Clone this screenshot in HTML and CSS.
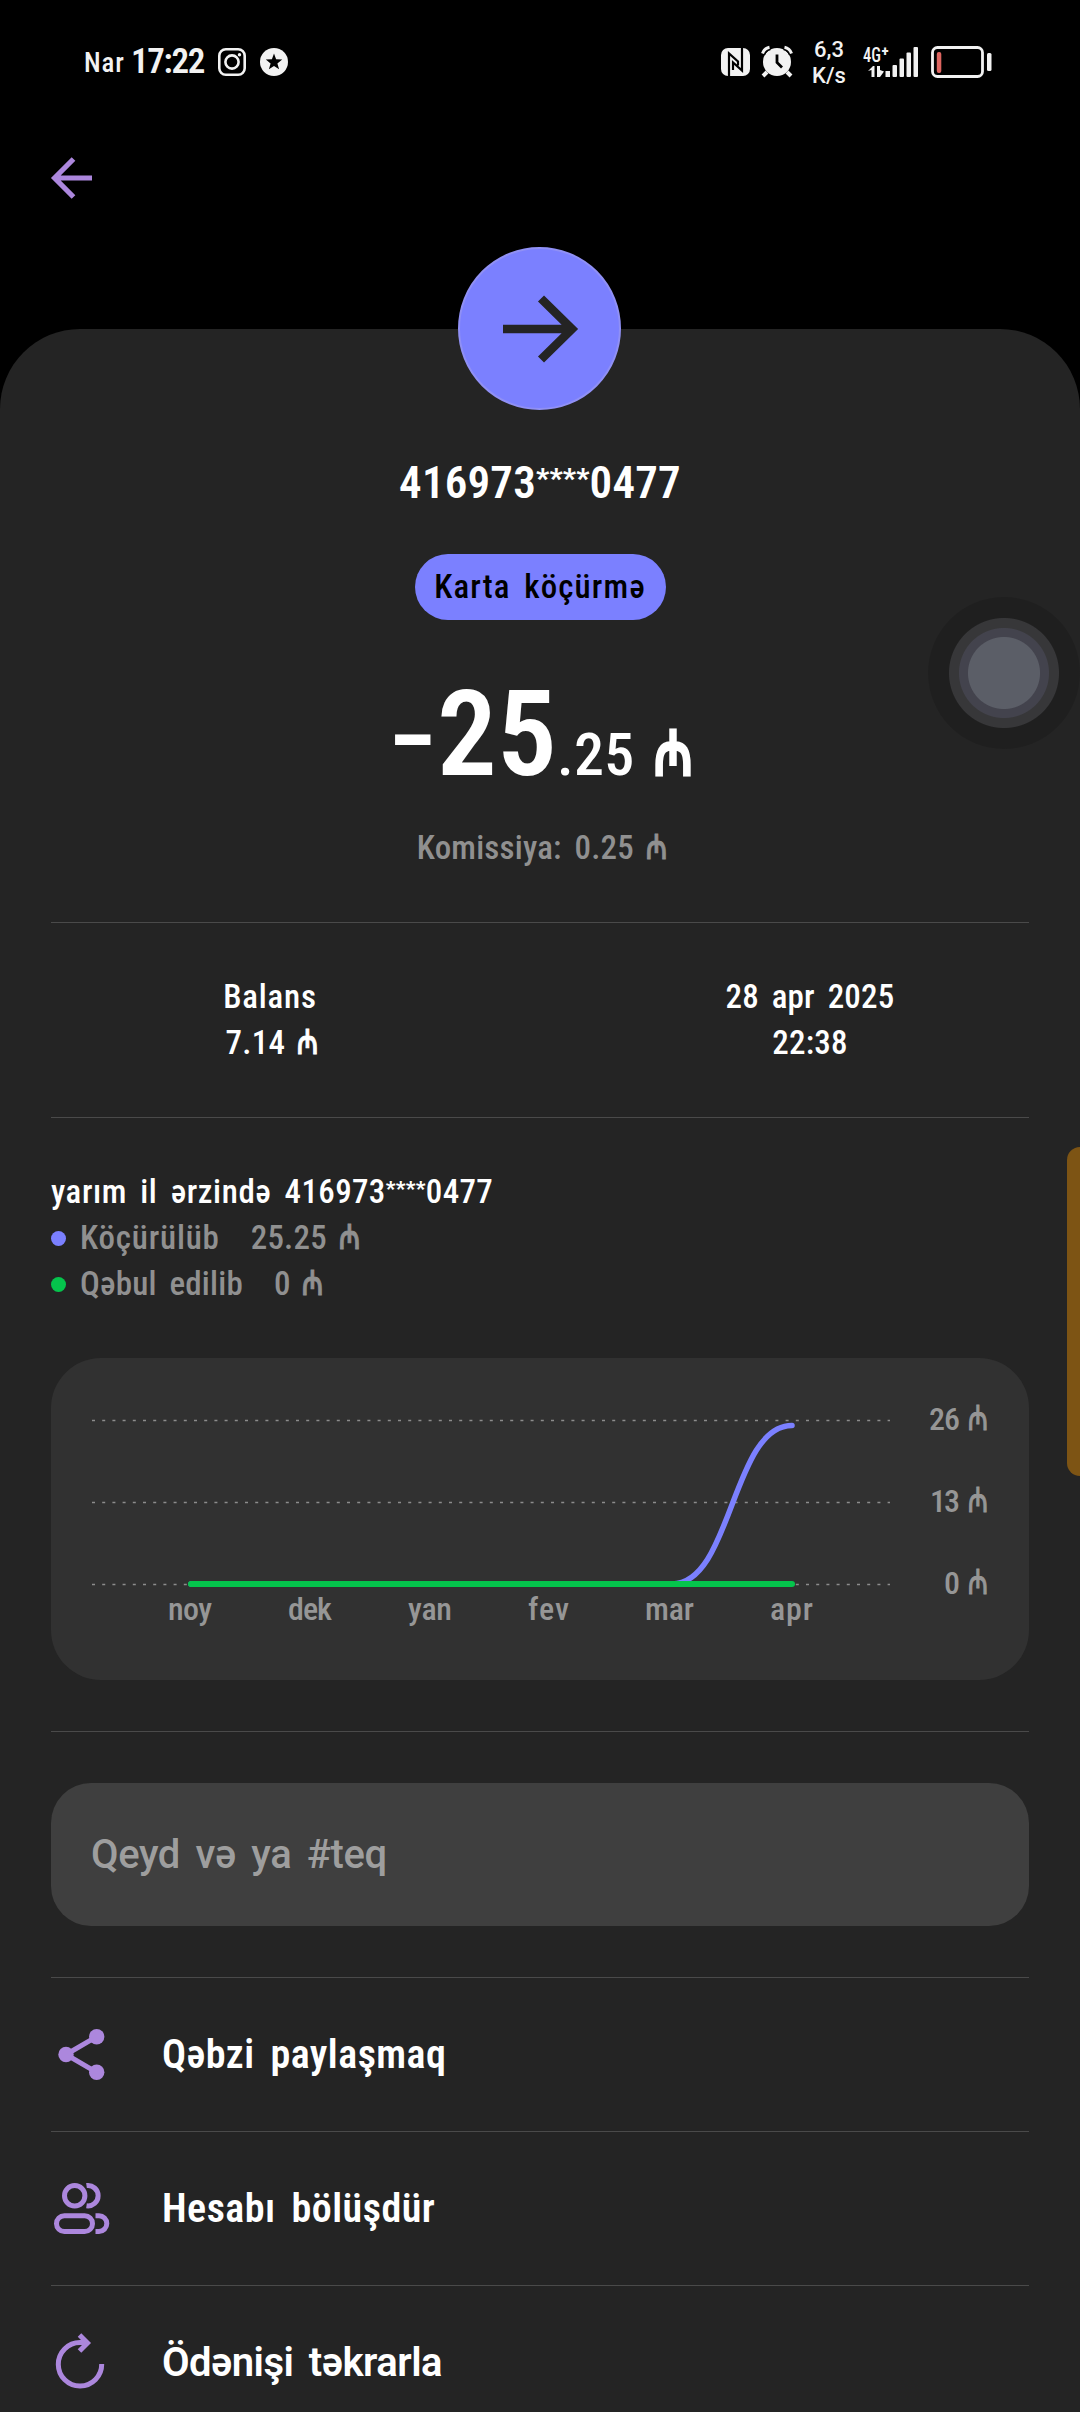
FILE: index.html
```html
<!DOCTYPE html>
<html lang="az">
<head>
<meta charset="utf-8">
<title>Karta köçürmə</title>
<link rel="stylesheet" href="styles.css">
</head>
<body>
<div class="screen">
  <div class="status">
    <span class="carrier">Nar</span>
    <span class="clock">17:22</span>
    <svg class="insta" width="28" height="28" viewBox="0 0 28 28" fill="none" stroke="#f2f2f2" stroke-width="2.6"><rect x="1.3" y="1.3" width="25.4" height="25.4" rx="6.5"/><circle cx="14" cy="14" r="6.6"/><circle cx="21.5" cy="6.8" r="1.7" fill="#f2f2f2" stroke="none"/></svg>
    <svg class="star" width="28" height="28" viewBox="0 0 28 28"><circle cx="14" cy="14" r="14" fill="#f2f2f2"/><path d="M14 5.600l2.100 5.700 6.100.300-4.800 3.800 1.700 5.900-5.100-3.400-5.100 3.400 1.700-5.900-4.800-3.800 6.100-.300z" fill="#000"/></svg>
    <svg class="nfc" width="29" height="28" viewBox="0 0 29 28"><rect width="29" height="28" rx="7" fill="#f2f2f2"/><path d="M8 28V5.500L17 13.500V17.500M21 0V22.500L12 14.500V22" fill="none" stroke="#000" stroke-width="2.200"/></svg>
    <svg class="alarm" width="32" height="31" viewBox="0 0 32 31" fill="none" stroke="#f2f2f2"><circle cx="16" cy="16" r="14" fill="#f2f2f2" stroke="none"/><path d="M1.500 8C2.500 4.500 5 2 9 1.300M30.500 8C29.500 4.500 27 2 23 1.300" stroke="#000" stroke-width="6"/><path d="M1.500 7.500C2.500 4.500 5 2 8.500 1.300M30.500 7.500C29.500 4.500 27 2 23.500 1.300" stroke-width="3"/><path d="M6 26l-4 4M26 26l4 4" stroke-width="4"/><path d="M16 8.500v8l5 5" stroke="#000" stroke-width="2.800"/></svg>
    <div class="speed"><span>6,3</span><span>K/s</span></div>
    <svg class="signal" width="55" height="32" viewBox="0 0 55 32" fill="#f2f2f2"><text class="net" x="0" y="15.500" textLength="18" lengthAdjust="spacingAndGlyphs">4G</text><text class="plus" x="18.500" y="10">+</text><path d="M5 25l5-5h1.500v11h-3v-7zM14 20h3v4l4 1.500-4 5.500h-3z"/><rect x="22.500" y="25" width="4.500" height="6"/><rect x="29.500" y="19" width="4.500" height="12" rx="1"/><rect x="36.500" y="12.500" width="4.500" height="18.500" rx="1"/><rect x="43.500" y="6.500" width="4.500" height="24.500" rx="1"/><rect x="50.500" y="1" width="4.500" height="30" rx="1"/></svg>
    <svg class="battery" width="61" height="32" viewBox="0 0 61 32"><rect x="1.500" y="1.500" width="50" height="29" rx="5" fill="none" stroke="#f2f2f2" stroke-width="2.800"/><rect x="5.800" y="6" width="4.500" height="21" rx="2" fill="#dd6560"/><rect x="56" y="7" width="4.500" height="18" rx="1.500" fill="#f2f2f2"/></svg>
  </div>

  <div class="nav">
    <svg width="42" height="42" viewBox="0 0 42 42" fill="none" stroke="#ac87dd" stroke-width="5.200"><path d="M41 21H4M22.500 2L3.600 21l18.900 19"/></svg>
  </div>

  <main class="panel">
    <div class="badge">
      <svg width="76" height="68" viewBox="0 0 76 68" fill="none" stroke="#242424" stroke-width="8.600"><path d="M1 34h70M39 3.500L70 34 39 64.500"/></svg>
    </div>
    <h1 class="number">416973<span class="stars">****</span>0477</h1>
    <div class="pill">Karta köçürmə</div>
    <div class="amount"><span class="minus">−</span><span>25</span><span class="cents">.25</span><span class="cur">₼</span></div>
    <div class="fee">Komissiya: 0.25 <span class="cur">₼</span></div>

    <div class="facts">
      <div><span class="wide">Balans</span><br>7.14 <span class="cur">₼</span></div>
      <div>28 apr 2025<br>22:38</div>
    </div>

    <section class="history">
      <p><span class="period">yarım il ərzində </span><span class="card">416973<span class="stars">****</span>0477</span></p>
      <p class="legend sent"><span class="wide">Köçürülüb</span><span class="val">25.25 <span class="cur">₼</span></span></p>
      <p class="legend received"><span>Qəbul edilib</span><span class="val">0 <span class="cur">₼</span></span></p>
      <div class="chart">
        <svg width="978" height="322" viewBox="0 0 978 322">
          <path class="grid" d="M41 62.500H839M41 144.500H839M41 226.500H839"/>
          <path class="line-sent" d="M140 226H621C681 226 681 67.500 741 67.500"/>
          <path class="line-received" d="M140 226H741"/>
          <g class="axis">
            <text x="117" y="262" textLength="44">noy</text>
            <text x="237" y="262" textLength="44">dek</text>
            <text x="357" y="262" textLength="44">yan</text>
            <text x="477" y="262" textLength="41">fev</text>
            <text x="594" y="262" textLength="49">mar</text>
            <text x="719" y="262" textLength="43">apr</text>
            <text x="878" y="72" textLength="31">26</text>
            <text x="879" y="154" textLength="30">13</text>
            <text x="893" y="236">0</text>
            <text class="unit" transform="translate(917 72) scale(.7 1)">₼</text>
            <text class="unit" transform="translate(917 154) scale(.7 1)">₼</text>
            <text class="unit" transform="translate(917 236) scale(.7 1)">₼</text>
          </g>
        </svg>
      </div>
    </section>

    <div class="note-wrap"><div class="note">Qeyd və ya #teq</div></div>

    <div class="row">
      <svg width="61" height="61" viewBox="0 0 61 61" fill="#ac87dd"><path d="M45.700 12.700L15 30.500l30.700 17.800" fill="none" stroke="#ac87dd" stroke-width="5"/><circle cx="15" cy="30.500" r="7.700"/><circle cx="45.700" cy="12.700" r="7.700"/><circle cx="45.700" cy="48.300" r="7.700"/></svg>
      <span>Qəbzi paylaşmaq</span>
    </div>
    <div class="row">
      <svg width="61" height="61" viewBox="0 0 61 61" fill="none" stroke="#ac87dd" stroke-width="5"><circle cx="23.700" cy="17.700" r="10.200"/><path d="M35.500 7.600A10.200 10.200 0 1 1 35.500 27.800"/><rect x="5.500" y="37.800" width="36" height="15.700" rx="7.850"/><path d="M44.500 37.800h3.500a7.800 7.800 0 0 1 0 15.600h-3.500"/></svg>
      <span>Hesabı bölüşdür</span>
    </div>
    <div class="row">
      <svg width="61" height="61" viewBox="0 0 61 61" fill="none" stroke="#ac87dd" stroke-width="5"><path d="M50.700 32A21.700 21.700 0 1 1 29 10.600H35"/><path d="M28.500 3l8 8-8 8"/></svg>
      <span class="repeat">Ödənişi təkrarla</span>
    </div>
  </main>
  <div class="assist"></div>
  <div class="edge"></div>
</div>
</body>
</html>
```

FILE: styles.css
```css
* { box-sizing: border-box; margin: 0; padding: 0; }
html { background: #000; }
body {
  width: 1080px;
  height: 2412px;
  overflow: hidden;
  background: #000;
  color: #fff;
  font-family: Roboto, "Noto Sans", sans-serif;
  font-stretch: 87.5%;
  font-weight: 500;
  font-size: 33px;
  line-height: 46px;
  letter-spacing: .2px;
  word-spacing: 5px;
}
svg { display: block; flex: none; overflow: visible; }
.screen { position: relative; height: 2412px; overflow: hidden; }

.status {
  display: flex;
  align-items: center;
  height: 123px;
  padding: 0 88px 0 84px;
  color: #f2f2f2;
  letter-spacing: 0;
}
.carrier { font-size: 27px; letter-spacing: .9px; width: 47px; padding-top: 2px; }
.clock { font-size: 35px; letter-spacing: -1.3px; width: 87px; padding-top: 1px; font-weight: 600; }
.star { margin-left: 14px; }
.nfc { margin-left: auto; }
.alarm { margin-left: 11px; }
.speed {
  display: flex;
  flex-direction: column;
  align-items: center;
  width: 34px;
  margin: 2px 17px 0 19px;
  font-size: 22px;
  font-stretch: 100%;
  line-height: 26px;
}
.battery { margin-left: 13px; }
.net { font-size: 20px; }
.plus { font-size: 15px; font-weight: 700; }

.nav { height: 206px; padding: 34px 51px 0; }

.panel {
  height: 2083px;
  padding: 0 51px;
  border-radius: 80px 80px 0 0;
  background: #242424;
  display: flex;
  flex-direction: column;
}
.panel > * { flex: none; }
.badge {
  display: flex;
  align-items: center;
  justify-content: center;
  width: 163px;
  height: 163px;
  margin: -82px 0 0 407px;
  border: 2px solid #9090f5;
  border-radius: 50%;
  background: #7b80ff;
}
.number {
  margin-top: 43px;
  font-size: 45px;
  font-weight: 600;
  line-height: 60px;
  text-align: center;
}
.stars {
  font-size: .63em;
  font-weight: 900;
  line-height: 0;
  vertical-align: .35em;
}
.pill {
  display: flex;
  align-items: center;
  justify-content: center;
  width: 251px;
  height: 66px;
  margin: 41px auto 0;
  border-radius: 33px;
  background: #7b80ff;
  color: #000;
  letter-spacing: 1.1px;
}
.amount {
  display: flex;
  align-items: baseline;
  height: 120px;
  margin: 55px 0 0 337px;
  font-size: 119px;
  font-weight: 600;
  line-height: 120px;
}
.minus { font-size: 100px; }
.cents { font-size: 60px; font-weight: 500; }
.cur {
  display: inline-block;
  width: .5em;
  margin-left: -1px;
  font-family: "Noto Sans", sans-serif;
  font-size: 35px;
  font-weight: 600;
  line-height: 0;
  -webkit-text-stroke: 1px currentColor;
  transform: scaleX(.7);
  transform-origin: left;
}
.amount .cur { font-size: 64px; margin-left: 20px; -webkit-text-stroke-width: 3px; }
.fee { margin-top: 30px; text-align: center; color: #909090; }

.facts {
  display: grid;
  grid-template-columns: 438px 438px;
  justify-content: space-between;
  margin-top: 51px;
  padding: 51px 0;
  border: solid #4a4a4a;
  border-width: 1px 0;
  text-align: center;
}
.wide { letter-spacing: .8px; }

.history { padding: 51px 0; border-bottom: 1px solid #4a4a4a; }
.period { letter-spacing: .6px; }
.card { letter-spacing: .35px; }
.legend { display: flex; align-items: center; color: #909090; }
.legend::before {
  content: "";
  width: 15px;
  height: 15px;
  margin-right: 14px;
  border-radius: 50%;
  background: #7b80ff;
}
.legend.received::before { background: #05c44c; }
.val { margin-left: 31px; }
.chart {
  height: 322px;
  margin-top: 51px;
  border-radius: 50px;
  background: #313131;
}
.grid { stroke: #8c8c8c; stroke-width: 1.3; stroke-dasharray: 3 7.2; }
.line-sent, .line-received { fill: none; stroke-width: 6; stroke-linecap: round; }
.line-sent { stroke: #7b80ff; stroke-width: 5.5; }
.line-received { stroke: #05c44c; }
.axis { fill: #969696; font-size: 32px; letter-spacing: 0; }
.unit { font-family: "Noto Sans", sans-serif; font-size: 34px; stroke: #969696; }

.note-wrap { padding: 51px 0; border-bottom: 1px solid #4a4a4a; }
.note {
  display: flex;
  align-items: center;
  height: 143px;
  padding-left: 40px;
  border-radius: 40px;
  background: #3f3f3f;
  color: #9e9e9e;
  font-size: 40px;
  font-stretch: 100%;
  letter-spacing: -.4px;
  word-spacing: 6px;
}
.row {
  display: flex;
  align-items: center;
  gap: 50px;
  height: 154px;
  border-bottom: 1px solid #4a4a4a;
  font-size: 40px;
  font-weight: 600;
  letter-spacing: .5px;
  word-spacing: 6px;
}
.repeat { font-stretch: 100%; letter-spacing: -.5px; }

.assist {
  position: absolute;
  left: 928px;
  top: 597px;
  width: 152px;
  height: 152px;
  border-radius: 50%;
  background: radial-gradient(circle, #5b5e67 35.5px, #43434d 36.5px 44.5px, #373739 45.5px 54.5px, #1f1f1f 55.5px);
}
.edge {
  position: absolute;
  right: 0;
  top: 1147px;
  width: 13px;
  height: 329px;
  border-radius: 13px 0 0 13px;
  background: #7d5414;
}
```
